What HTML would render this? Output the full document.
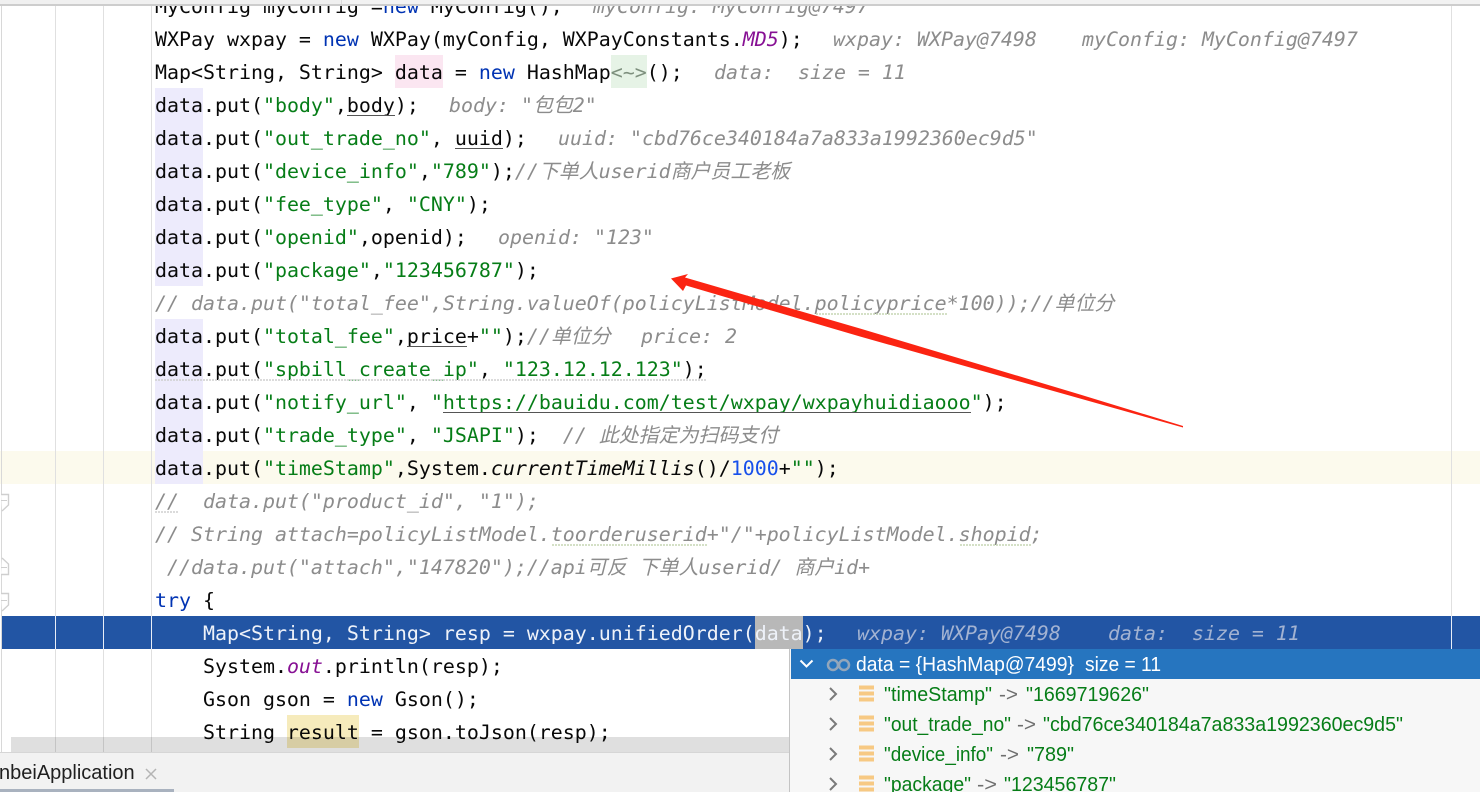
<!DOCTYPE html>
<html lang="zh"><head><meta charset="utf-8"><title>IDE debugger</title>
<style>
html,body{margin:0;padding:0;background:#fff;width:1480px;height:792px;overflow:hidden}
#ed{position:absolute;left:0;top:6px;width:1480px;height:746px;overflow:hidden}
.a{position:absolute}
.l{position:absolute;left:155px;height:33px;white-space:pre;font:19.93px/33px "DejaVu Sans Mono","Liberation Mono","Noto Sans CJK SC",monospace;color:#080808;margin-top:-5px}
.w{position:absolute;height:33px;white-space:pre;font:italic 19.93px/33px "DejaVu Sans Mono","Liberation Mono","Noto Sans CJK SC",monospace;color:#8c8c8c;margin-top:-5px}
.k{color:#0033b3}.s{color:#067d17}.c{color:#8c8c8c;font-style:italic}.n{color:#1750eb}.f{color:#871094;font-style:italic}.i{font-style:italic}
.h{position:absolute;height:33px;margin-top:-6px}
.p{background:#edebfc;left:155px;width:48px}
.u{position:absolute;height:1px;background:#555;margin-top:-6px}
.v{position:absolute;top:0;width:1px;height:746px;background:#e0e0e0}
</style></head><body>
<div class="a" style="left:0;top:0;width:1480px;height:4px;background:#f0f0f0"></div>
<div class="a" style="left:0;top:4px;width:1480px;height:2px;background:#cdcdcd"></div>
<div class="a" style="left:341px;top:0;width:1139px;height:4px;background:#f2f2f2;border-left:1px solid #dcdcdc"></div>
<div id="ed">
<div class="a" style="left:0;top:445px;width:1480px;height:33px;background:#fcfaed"></div>
<div class="v" style="left:1px;background:#d8d8d8"></div><div class="v" style="left:55px"></div><div class="v" style="left:103px"></div><div class="v" style="left:151px"></div><div class="v" style="left:1451px"></div>

<div class="h" style="top:55px;left:395px;width:48px;background:#fbe6f1"></div>
<div class="h" style="top:55px;left:611px;width:36px;background:#e6f3e6"></div>
<div class="h p" style="top:88px"></div><div class="h p" style="top:121px"></div><div class="h p" style="top:154px"></div><div class="h p" style="top:187px"></div><div class="h p" style="top:220px"></div><div class="h p" style="top:253px"></div>
<div class="h p" style="top:319px"></div><div class="h p" style="top:352px"></div><div class="h p" style="top:385px"></div><div class="h p" style="top:418px"></div><div class="h p" style="top:451px"></div>
<div class="h" style="top:715px;left:287px;width:72px;background:#f6ebbc"></div>

<div class="l" style="top:-11px">MyConfig myConfig =<span class="k">new</span> MyConfig();</div><div class="w" style="top:-11px;left:593px">myConfig: MyConfig@7497</div>
<div class="l" style="top:22px">WXPay wxpay = <span class="k">new</span> WXPay(myConfig, WXPayConstants.<span class="f">MD5</span>);</div><div class="w" style="top:22px;left:833px">wxpay: WXPay@7498</div><div class="w" style="top:22px;left:1082px">myConfig: MyConfig@7497</div>
<div class="l" style="top:55px">Map&lt;String, String&gt; data = <span class="k">new</span> HashMap<span style="color:#7d8f7d">&lt;~&gt;</span>();</div><div class="w" style="top:55px;left:714px">data:  size = 11</div>
<div class="l" style="top:88px">data.put(<span class="s">"body"</span>,body);</div><div class="w" style="top:88px;left:449px">body: "包包2"</div>
<div class="l" style="top:121px">data.put(<span class="s">"out_trade_no"</span>, uuid);</div><div class="w" style="top:121px;left:558px">uuid: "cbd76ce340184a7a833a1992360ec9d5"</div>
<div class="l" style="top:154px">data.put(<span class="s">"device_info"</span>,<span class="s">"789"</span>);<span class="c">//下单人userid商户员工老板</span></div>
<div class="l" style="top:187px">data.put(<span class="s">"fee_type"</span>, <span class="s">"CNY"</span>);</div>
<div class="l" style="top:220px">data.put(<span class="s">"openid"</span>,openid);</div><div class="w" style="top:220px;left:498px">openid: "123"</div>
<div class="l" style="top:253px">data.put(<span class="s">"package"</span>,<span class="s">"123456787"</span>);</div>
<div class="l c" style="top:286px">// data.put("total_fee",String.valueOf(policyListModel.policyprice*100));//单位分</div>
<div class="l" style="top:319px">data.put(<span class="s">"total_fee"</span>,price+<span class="s">""</span>);<span class="c">//单位分</span></div><div class="w" style="top:319px;left:641px">price: 2</div>
<div class="l" style="top:352px">data.put(<span class="s">"spbill_create_ip"</span>, <span class="s">"123.12.12.123"</span>);</div>
<div class="l" style="top:385px">data.put(<span class="s">"notify_url"</span>, <span class="s">"https://bauidu.com/test/wxpay/wxpayhuidiaooo"</span>);</div>
<div class="l" style="top:418px">data.put(<span class="s">"trade_type"</span>, <span class="s">"JSAPI"</span>);  <span class="c">// 此处指定为扫码支付</span></div>
<div class="l" style="top:451px">data.put(<span class="s">"timeStamp"</span>,System.<span class="i">currentTimeMillis</span>()/<span class="n">1000</span>+<span class="s">""</span>);</div>
<div class="l c" style="top:484px">//  data.put("product_id", "1");</div>
<div class="l c" style="top:517px">// String attach=policyListModel.toorderuserid+"/"+policyListModel.shopid;</div>
<div class="l c" style="top:550px"> //data.put("attach","147820");//api可反 下单人userid/ 商户id+</div>
<div class="l" style="top:583px"><span class="k">try</span> {</div>
<div class="l" style="top:649px">    System.<span class="f">out</span>.println(resp);</div>
<div class="l" style="top:682px">    Gson gson = <span class="k">new</span> Gson();</div>
<div class="l" style="top:715px">    String result = gson.toJson(resp);</div>

<div class="u" style="left:347px;top:115px;width:48px"></div>
<div class="u" style="left:455px;top:148px;width:48px"></div>
<div class="u" style="left:407px;top:346px;width:60px"></div>
<div class="u" style="left:443px;top:412px;width:528px"></div>

<div class="a" style="left:2px;top:610px;width:1478px;height:33px;background:#2255a4"></div>
<div class="a" style="left:55px;top:610px;width:1px;height:33px;background:#e8eef8"></div>
<div class="a" style="left:103px;top:610px;width:1px;height:33px;background:#e8eef8"></div>
<div class="a" style="left:151px;top:610px;width:1px;height:33px;background:#e8eef8"></div>
<div class="a" style="left:1451px;top:610px;width:1px;height:33px;background:#e8eef8"></div>
<div class="a" style="left:755px;top:610px;width:48px;height:33px;background:#b8b8b8"></div>
<div class="l" style="top:616px;color:#eef2f9">    Map&lt;String, String&gt; resp = wxpay.unifiedOrder(data);</div>
<div class="w" style="top:616px;left:857px;color:#a3b3d2">wxpay: WXPay@7498</div><div class="w" style="top:616px;left:1108px;color:#a3b3d2">data:  size = 11</div>

<div class="a" style="left:11px;top:731px;width:779px;height:15px;background:rgba(0,0,0,.125)"></div>
</div>

<svg class="a" style="left:0;top:0" width="1480" height="792" viewBox="0 0 1480 792">
<g stroke="#c5d6b4" stroke-width="1.5" stroke-dasharray="2 1" fill="none">
<line x1="816" y1="314" x2="947" y2="314"/><line x1="552" y1="545" x2="708" y2="545"/><line x1="960" y1="545" x2="1032" y2="545"/>
</g>
<g stroke="#cfcfcf" stroke-width="1.5" stroke-dasharray="2 1" fill="none">
<line x1="155" y1="380" x2="706" y2="380"/><line x1="155" y1="512" x2="179" y2="512"/>
</g>
<g fill="#fff" stroke="#cfcfcf" stroke-width="1.4">
<path d="M1 494.5H8.5V505L2 511"/><path d="M2 558L8.5 564V574.5H1"/><path d="M1 593.5H8.5V605L2 611"/>
</g>
<g stroke="#cfcfcf" stroke-width="1" fill="none"><line x1="1" y1="500.5" x2="7" y2="500.5"/><line x1="1" y1="567.5" x2="7" y2="567.5"/><line x1="1" y1="600.5" x2="7" y2="600.5"/></g>
</svg>

<div class="a" style="left:0;top:752px;width:790px;height:40px;background:#f2f2f2;border-top:1px solid #d6d6d6;box-sizing:border-box"></div>
<div class="a" style="left:-1px;top:760px;height:26px;font:20px/26px 'Liberation Sans',sans-serif;color:#1f1f1f;white-space:pre">nbeiApplication</div>
<svg class="a" style="left:144px;top:767px" width="14" height="14"><path d="M2 2L12 12M12 2L2 12" stroke="#b4b4b4" stroke-width="1.5" fill="none"/></svg>
<div class="a" style="left:0;top:789px;width:174px;height:3px;background:#a9b2bf"></div>

<div class="a" style="left:789px;top:649px;width:691px;height:143px;background:#f7f7f7;border-left:1px solid #c4c4c4;box-sizing:border-box"></div>
<div class="a" style="left:791px;top:649px;width:689px;height:30px;background:#2675bf"></div>
<svg class="a" style="left:0;top:0" width="1480" height="792" viewBox="0 0 1480 792" font-family="Liberation Sans, sans-serif" font-size="20">
<path d="M800.5 660.5L806.5 666.5L812.5 660.5" stroke="#fff" stroke-width="2" fill="none"/>
<g fill="none" stroke="#93a6bb" stroke-width="2.5"><circle cx="833" cy="665" r="5"/><circle cx="844" cy="665" r="5"/></g>
<text x="856" y="671" fill="#fff" textLength="218" lengthAdjust="spacingAndGlyphs">data = {HashMap@7499}</text>
<text x="1085" y="671" fill="#fff" textLength="76" lengthAdjust="spacingAndGlyphs">size = 11</text>
<g fill="none" stroke="#7a7a7a" stroke-width="2">
<path d="M830 688L836 694L830 700"/><path d="M830 718L836 724L830 730"/><path d="M830 748L836 754L830 760"/><path d="M830 778L836 784L830 790"/>
</g>
<g fill="#f7c983">
<path d="M859 685.5h15v4h-15zM859 691.5h15v4h-15zM859 697.5h15v4h-15z"/>
<path d="M859 715.5h15v4h-15zM859 721.5h15v4h-15zM859 727.5h15v4h-15z"/>
<path d="M859 745.5h15v4h-15zM859 751.5h15v4h-15zM859 757.5h15v4h-15z"/>
<path d="M859 775.5h15v4h-15zM859 781.5h15v4h-15zM859 787.5h15v4h-15z"/>
</g>
<g fill="#067d17">
<text x="884" y="701" textLength="108" lengthAdjust="spacingAndGlyphs">"timeStamp"</text><text x="1026" y="701" textLength="123" lengthAdjust="spacingAndGlyphs">"1669719626"</text>
<text x="884" y="731" textLength="127" lengthAdjust="spacingAndGlyphs">"out_trade_no"</text><text x="1043" y="731" textLength="360" lengthAdjust="spacingAndGlyphs">"cbd76ce340184a7a833a1992360ec9d5"</text>
<text x="884" y="761" textLength="109" lengthAdjust="spacingAndGlyphs">"device_info"</text><text x="1027" y="761" textLength="47" lengthAdjust="spacingAndGlyphs">"789"</text>
<text x="884" y="791" textLength="87" lengthAdjust="spacingAndGlyphs">"package"</text><text x="1004" y="791" textLength="112" lengthAdjust="spacingAndGlyphs">"123456787"</text>
</g>
<g fill="#6e6e6e">
<text x="999" y="701" textLength="19" lengthAdjust="spacingAndGlyphs">-&gt;</text>
<text x="1017" y="731" textLength="19" lengthAdjust="spacingAndGlyphs">-&gt;</text>
<text x="1000" y="761" textLength="19" lengthAdjust="spacingAndGlyphs">-&gt;</text>
<text x="977" y="791" textLength="20" lengthAdjust="spacingAndGlyphs">-&gt;</text>
</g>
<polygon points="671,278.5 688,274 685,277.5 860,328.5 1080,394.5 1183,426 1183,427.5 1080,398.5 860,336.5 686,285.5 683,291" fill="#fb2412"/>
</svg>
</body></html>
